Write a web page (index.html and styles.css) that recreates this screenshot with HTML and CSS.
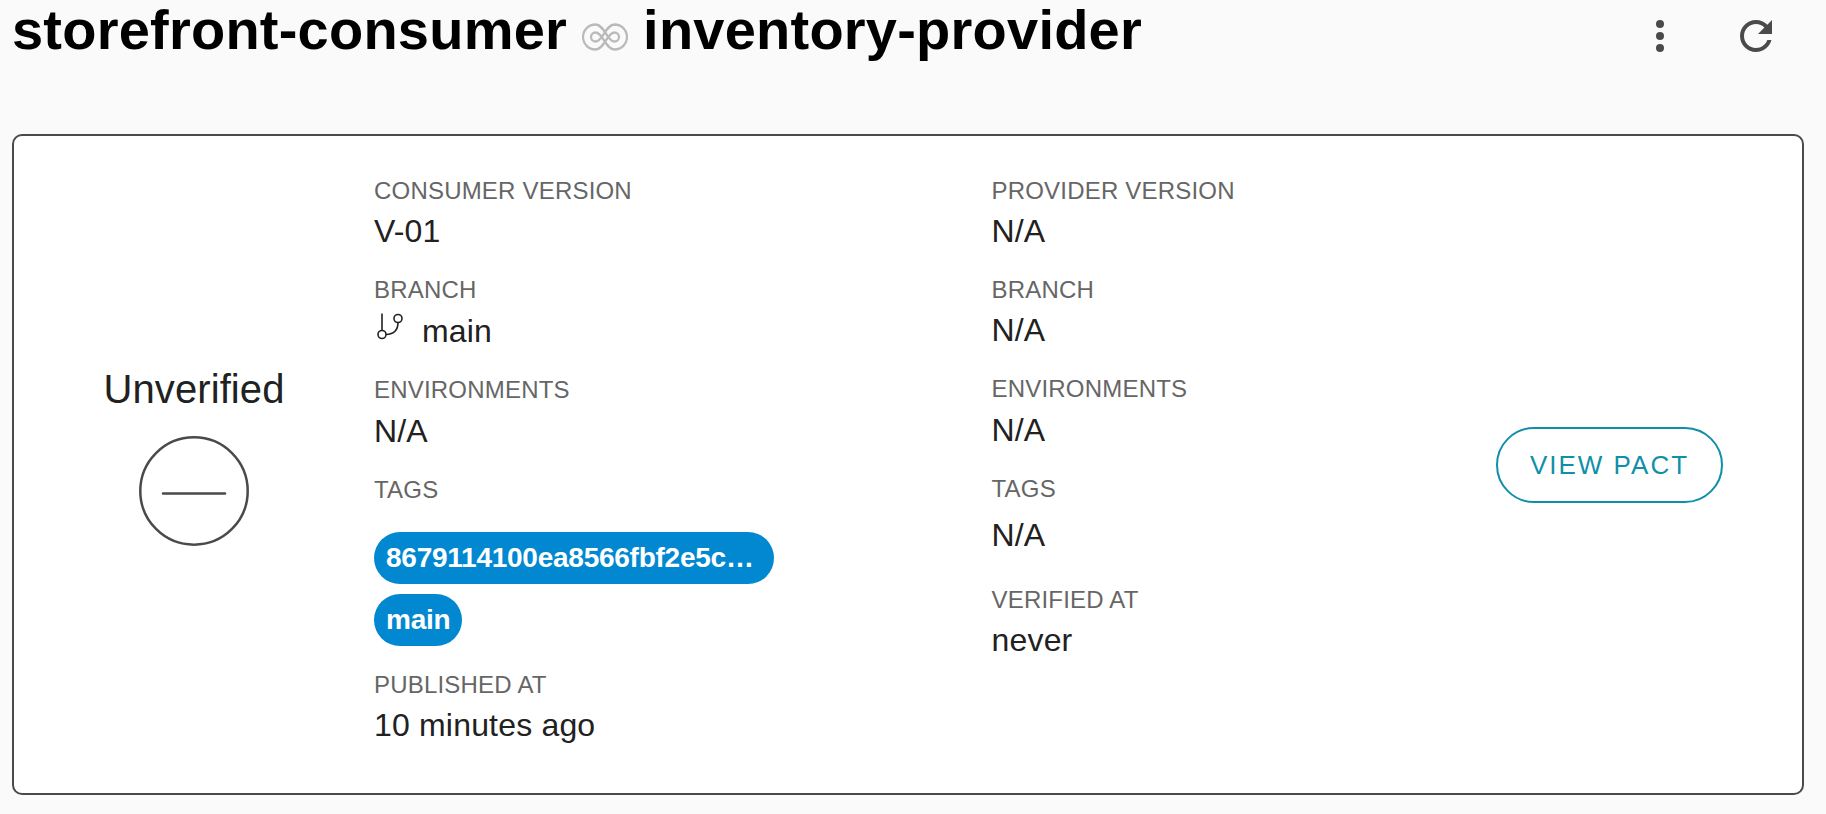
FILE: index.html
```html
<!DOCTYPE html>
<html lang="en">
<head>
<meta charset="utf-8">
<title>storefront-consumer / inventory-provider</title>
<link rel="stylesheet" href="styles.css">
</head>
<body>
<header class="header">
  <h1 class="title">
    <span>storefront-consumer</span>
    <svg class="link-icon" viewBox="0 0 46 28"><g fill="none" stroke="#bababa" stroke-width="2.3"><path d="M13.500 1.500C22.500 1.500 25 18.500 32.500 18.500A4.500 4.500 0 0 0 32.500 9.500C25 9.500 22.500 26.500 13.500 26.500A12.500 12.500 0 0 1 13.500 1.500Z"/><path d="M32.500 1.500C23.500 1.500 21 18.500 13.500 18.500A4.500 4.500 0 0 1 13.500 9.500C21 9.500 23.500 26.500 32.500 26.500A12.500 12.500 0 0 0 32.500 1.500Z"/></g></svg>
    <span>inventory-provider</span>
  </h1>
  <div class="actions">
    <svg class="action" viewBox="0 0 24 24"><circle cx="12" cy="6" r="2"/><circle cx="12" cy="12" r="2"/><circle cx="12" cy="18" r="2"/></svg>
    <svg class="action" viewBox="0 0 24 24"><path d="M17.65 6.35C16.2 4.9 14.21 4 12 4c-4.42 0-7.99 3.58-7.99 8s3.57 8 7.99 8c3.73 0 6.84-2.55 7.73-6h-2.08c-.82 2.33-3.04 4-5.65 4-3.31 0-6-2.69-6-6s2.69-6 6-6c1.66 0 3.14.69 4.22 1.78L13 11h7V4l-2.35 2.35z"/></svg>
  </div>
</header>
<main class="card">
  <section class="status">
    <div class="status-text">Unverified</div>
    <svg class="status-icon" viewBox="0 0 110 110"><circle cx="55" cy="55" r="53.7"/><path d="M24 57.5H86"/></svg>
  </section>
  <dl class="details consumer">
    <div class="field"><dt>CONSUMER VERSION</dt><dd>V-01</dd></div>
    <div class="field tall"><dt>BRANCH</dt><dd class="branch"><svg class="branch-icon" viewBox="0 0 32 32"><g fill="none" stroke="#222" stroke-width="1.6"><path d="M8 3.500V20.500M12 24.500Q24 24 24 12.500"/><circle cx="8" cy="24.500" r="4"/><circle cx="24" cy="8.500" r="4"/></g></svg><span>main</span></dd></div>
    <div class="field tall"><dt>ENVIRONMENTS</dt><dd>N/A</dd></div>
    <div class="field tags"><dt>TAGS</dt><dd class="chips"><span class="chip long">8679114100ea8566fbf2e5c…</span><span class="chip">main</span></dd></div>
    <div class="field"><dt>PUBLISHED AT</dt><dd>10 minutes ago</dd></div>
  </dl>
  <dl class="details provider">
    <div class="field"><dt>PROVIDER VERSION</dt><dd>N/A</dd></div>
    <div class="field"><dt>BRANCH</dt><dd>N/A</dd></div>
    <div class="field tall"><dt>ENVIRONMENTS</dt><dd>N/A</dd></div>
    <div class="field tags-empty"><dt>TAGS</dt><dd>N/A</dd></div>
    <div class="field"><dt>VERIFIED AT</dt><dd>never</dd></div>
  </dl>
  <div class="pact"><button class="view-pact" type="button">VIEW PACT</button></div>
</main>
</body>
</html>
```

FILE: styles.css
```css
* {
  box-sizing: border-box;
}

body {
  margin: 0;
  height: 814px;
  overflow: hidden;
  background: #fafafa;
  color: #212121;
  font-family: "Liberation Sans", Arial, sans-serif;
}

.header {
  display: flex;
  justify-content: space-between;
  height: 134px;
  padding: 0 46px 0 12px;
}

.title {
  display: flex;
  margin: 0;
  height: 64px;
  color: #000;
  font-size: 56px;
  letter-spacing: 0.23px;
  line-height: 60px;
  white-space: nowrap;
}

.link-icon {
  width: 46px;
  height: 28px;
  margin: 23px 15px 0;
}

.actions {
  display: flex;
  gap: 48px;
  padding-top: 12px;
}

.action {
  width: 48px;
  height: 48px;
  fill: #4a4a4a;
}

.card {
  display: grid;
  grid-template-columns: 360px 617.5px 449.5px 1fr;
  width: 1792px;
  height: 661px;
  margin-left: 12px;
  padding: 40px 0 0;
  border: 2px solid #4a4a4a;
  border-radius: 10px;
  background: #fff;
}

.status {
  display: flex;
  flex-direction: column;
  align-items: center;
  padding-top: 190px;
}

.status-text {
  font-size: 40px;
  letter-spacing: 0.1px;
  line-height: 46px;
}

.status-icon {
  width: 110px;
  height: 110px;
  margin-top: 24px;
  fill: none;
  stroke: #4a4a4a;
  stroke-width: 2.5;
}

.status-icon path {
  stroke-linecap: round;
}

.details {
  margin: 0;
}

.field {
  height: 99px;
}

dt {
  color: #666;
  font-size: 24px;
  letter-spacing: 0.2px;
  line-height: 30px;
}

dd {
  margin: 0;
  font-size: 32px;
  letter-spacing: 0.18px;
  line-height: 50px;
}

.field.tall {
  height: 100px;
}

.tall dd {
  padding-top: 1px;
}

.branch {
  display: flex;
}

.branch-icon {
  width: 32px;
  height: 32px;
  margin: 4px 16px 0 0;
}

.field.tags {
  height: 195px;
}

.chips {
  display: flex;
  flex-direction: column;
  align-items: flex-start;
  gap: 10px;
  padding-top: 27px;
}

.chip {
  height: 52px;
  padding: 0 12px;
  border-radius: 26px;
  background: #0288d1;
  color: #fff;
  font-size: 28px;
  font-weight: 700;
  letter-spacing: -0.25px;
  line-height: 52px;
}

.chip.long {
  width: 400px;
}

.field.tags-empty {
  height: 111px;
}

.tags-empty dd {
  padding-top: 6px;
}

.pact {
  padding: 251px 0 0 55px;
}

.view-pact {
  width: 227px;
  height: 76px;
  padding: 0;
  border: 2px solid #118fa8;
  border-radius: 38px;
  background: #fff;
  color: #118fa8;
  font-family: inherit;
  font-size: 26px;
  letter-spacing: 2px;
}
```
